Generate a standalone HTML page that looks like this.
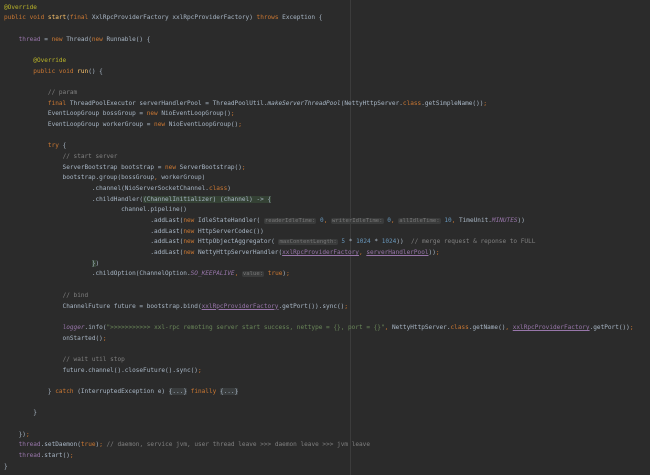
<!DOCTYPE html>
<html><head><meta charset="utf-8"><style>
html,body{margin:0;padding:0;background:#2b2b2b;width:650px;height:475px;overflow:hidden}
pre{position:absolute;left:4px;top:2.7px;margin:0;font-family:"DejaVu Sans Mono","Liberation Mono",monospace;font-size:6.08px;line-height:10.67px;color:#a9b7c6;white-space:pre}
.k{color:#cc7832}.a{color:#bbb529}.c{color:#808080}.p{color:#9876aa}.n{color:#6897bb}.s{color:#6a8759}
.i{color:#9876aa;font-style:italic}.u{text-decoration:underline}
.h{background:#3a3b3b;color:#787878;border-radius:2px;padding:0 1px;font-size:5.6px}
.g{background:#344134}
.f{background:#3a3d3e;color:#a9b7c6;border-radius:1px}
.rl{position:absolute;left:350px;top:0;width:1px;height:475px;background:#3c3c3c}
</style></head><body>
<div class="rl"></div>
<pre><span class="a">@Override</span>
<span class="k">public void </span><span style="color:#ffc66d">start</span>(<span class="k">final </span>XxlRpcProviderFactory xxlRpcProviderFactory) <span class="k">throws </span>Exception {

    <span class="p">thread </span>= <span class="k">new </span>Thread(<span class="k">new </span>Runnable() {

        <span class="a">@Override</span>
        <span class="k">public void </span><span style="color:#ffc66d">run</span>() {

            <span class="c">// param</span>
            <span class="k">final </span>ThreadPoolExecutor serverHandlerPool = ThreadPoolUtil.<span style="font-style:italic">makeServerThreadPool</span>(NettyHttpServer.<span class="k">class</span>.getSimpleName())<span class="k">;</span>
            EventLoopGroup bossGroup = <span class="k">new </span>NioEventLoopGroup()<span class="k">;</span>
            EventLoopGroup workerGroup = <span class="k">new </span>NioEventLoopGroup()<span class="k">;</span>

            <span class="k">try </span>{
                <span class="c">// start server</span>
                ServerBootstrap bootstrap = <span class="k">new </span>ServerBootstrap()<span class="k">;</span>
                bootstrap.group(bossGroup<span class="k">, </span>workerGroup)
                        .channel(NioServerSocketChannel.<span class="k">class</span>)
                        .childHandler(<span class="g">(ChannelInitializer) (channel) -&gt; {</span>
                                channel.pipeline()
                                        .addLast(<span class="k">new </span>IdleStateHandler( <span class="h">readerIdleTime:</span> <span class="n">0</span><span class="k">, </span><span class="h">writerIdleTime:</span> <span class="n">0</span><span class="k">, </span><span class="h">allIdleTime:</span> <span class="n">10</span><span class="k">, </span>TimeUnit.<span class="i">MINUTES</span>))
                                        .addLast(<span class="k">new </span>HttpServerCodec())
                                        .addLast(<span class="k">new </span>HttpObjectAggregator( <span class="h">maxContentLength:</span> <span class="n">5 </span>* <span class="n">1024 </span>* <span class="n">1024</span>))  <span class="c">// merge request &amp; reponse to FULL</span>
                                        .addLast(<span class="k">new </span>NettyHttpServerHandler(<span class="p u">xxlRpcProviderFactory</span><span class="k">, </span><span class="p u">serverHandlerPool</span>))<span class="k">;</span>
                        <span class="g">}</span>)
                        .childOption(ChannelOption.<span class="i">SO_KEEPALIVE</span><span class="k">, </span><span class="h">value:</span> <span class="k">true</span>)<span class="k">;</span>

                <span class="c">// bind</span>
                ChannelFuture future = bootstrap.bind(<span class="p u">xxlRpcProviderFactory</span>.getPort()).sync()<span class="k">;</span>

                <span class="i">logger</span>.info(<span class="s">"&gt;&gt;&gt;&gt;&gt;&gt;&gt;&gt;&gt;&gt;&gt; xxl-rpc remoting server start success, nettype = {}, port = {}"</span><span class="k">, </span>NettyHttpServer.<span class="k">class</span>.getName()<span class="k">, </span><span class="p u">xxlRpcProviderFactory</span>.getPort())<span class="k">;</span>
                onStarted()<span class="k">;</span>

                <span class="c">// wait util stop</span>
                future.channel().closeFuture().sync()<span class="k">;</span>

            } <span class="k">catch </span>(InterruptedException e) <span class="f">{...}</span> <span class="k">finally </span><span class="f">{...}</span>

        }

    })<span class="k">;</span>
    <span class="p">thread</span>.setDaemon(<span class="k">true</span>)<span class="k">; </span><span class="c">// daemon, service jvm, user thread leave &gt;&gt;&gt; daemon leave &gt;&gt;&gt; jvm leave</span>
    <span class="p">thread</span>.start()<span class="k">;</span>
}</pre>
</body></html>
